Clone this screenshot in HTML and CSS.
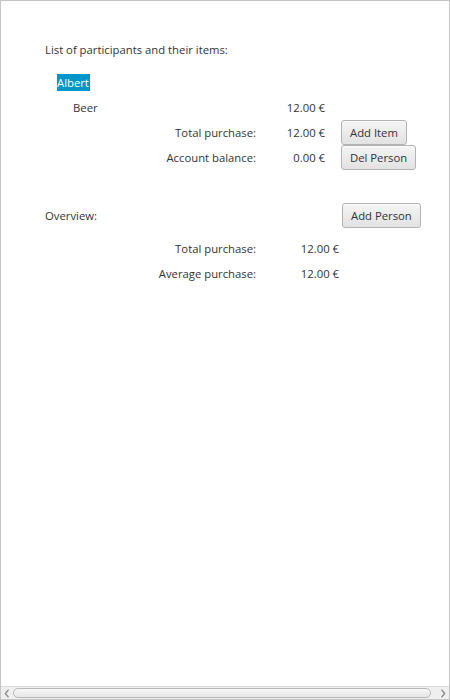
FILE: index.html
```html
<!DOCTYPE html>
<html>
<head>
<meta charset="utf-8">
<link rel="stylesheet" href="styles.css">
</head>
<body>
<div class="pane">
  <div class="content">
    <div class="title">List of participants and their items:</div>
    <div class="person">
      <div class="name-row"><span class="name">Albert</span></div>
      <div class="grid">
        <div class="item-name">Beer</div>
        <div class="value">12.00 €</div>
        <div></div>
        <div class="label">Total purchase:</div>
        <div class="value">12.00 €</div>
        <div class="btn-cell"><button class="btn">Add Item</button></div>
        <div class="label">Account balance:</div>
        <div class="value">0.00 €</div>
        <div class="btn-cell"><button class="btn">Del Person</button></div>
      </div>
    </div>
    <div class="overview">
      <div class="ov-head">
        <div class="ov-title">Overview:</div>
        <button class="btn">Add Person</button>
      </div>
      <div class="ov-grid">
        <div class="label">Total purchase:</div>
        <div class="value">12.00 €</div>
        <div class="label">Average purchase:</div>
        <div class="value">12.00 €</div>
      </div>
    </div>
  </div>
  <div class="hscroll">
    <svg class="arrow" width="6" height="9" viewBox="0 0 6 9"><path d="M4.5 0.8 L1.3 4.5 L4.5 8.2" fill="none" stroke="#8a8a8a" stroke-width="1.3"/></svg>
    <div class="thumb"></div>
    <svg class="arrow" width="6" height="9" viewBox="0 0 6 9"><path d="M1.5 0.8 L4.7 4.5 L1.5 8.2" fill="none" stroke="#8a8a8a" stroke-width="1.3"/></svg>
  </div>
</div>
</body>
</html>
```

FILE: styles.css
```css
* { box-sizing: border-box; }
html, body { margin: 0; padding: 0; background: #fff; }
body {
  font-family: "Open Sans", "Noto Sans", sans-serif;
  font-size: 11.3px;
  color: #333333;
}
.pane {
  width: 450px;
  height: 700px;
  border: 1px solid #c4c4c4;
  display: flex;
  flex-direction: column;
  background: #fff;
}
.content {
  flex: 1;
  padding: 40px 0 0 44px;
}
.title {
  height: 17px;
  line-height: 17px;
}
.person {
  margin-top: 16px;
}
.name-row {
  height: 17px;
  padding-left: 12px;
}
.name {
  display: inline-block;
  height: 17px;
  line-height: 17px;
  background: #0096c9;
  color: #fff;
  padding: 0 1px 0 0;
}
.grid {
  margin-top: 4px;
  display: grid;
  grid-template-columns: 211px 69px auto;
  grid-auto-rows: 25px;
  align-items: center;
}
.item-name {
  padding-left: 28px;
}
.label {
  text-align: right;
}
.value {
  text-align: right;
}
.btn-cell {
  padding-left: 16px;
  display: flex;
  align-items: center;
}
.btn {
  font-family: inherit;
  font-size: 11.3px;
  color: #333;
  height: 25px;
  padding: 0 8px;
  border: 1px solid #b3b3b3;
  border-radius: 3px;
  background: linear-gradient(#f5f5f5, #e2e2e2);
  box-shadow: inset 0 1px 0 #fbfbfb;
  margin: 0;
}
.overview {
  margin-top: 33px;
}
.ov-head {
  display: flex;
  align-items: center;
  height: 25px;
}
.ov-title {
  width: 297px;
}
.ov-grid {
  margin-top: 8px;
  display: grid;
  grid-template-columns: 211px 83px;
  grid-auto-rows: 25px;
  align-items: center;
}
.hscroll {
  height: 13px;
  background: #efefef;
  border-top: 1px solid #dcdcdc;
  display: flex;
  align-items: center;
  padding: 0 3px 0 3px;
  gap: 3px;
}
.arrow { flex: none; }
.thumb {
  flex: 1;
  height: 10px;
  margin-right: 6px;
  border: 1px solid #b9b9b9;
  border-radius: 5px;
  background: linear-gradient(#f7f7f7, #e6e6e6);
}
```
